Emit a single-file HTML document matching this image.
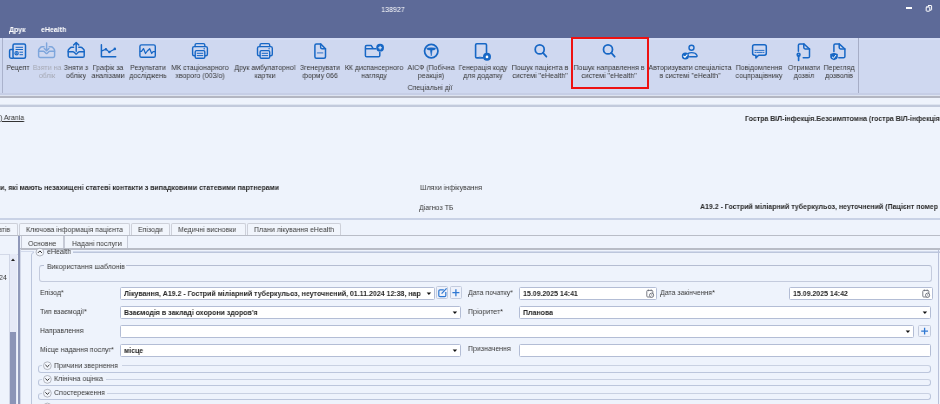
<!DOCTYPE html><html><head><meta charset="utf-8"><style>
html,body{margin:0;padding:0}
body{width:940px;height:404px;overflow:hidden;position:relative;background:#eef3fc;font-family:"Liberation Sans",sans-serif}
.t{position:absolute;white-space:nowrap;line-height:10px;will-change:transform}
.r{position:absolute;box-sizing:border-box}
svg{position:absolute;left:0;top:0}
</style></head><body>
<div class="r" style="left:0px;top:0px;width:940px;height:38px;background:#5d6a98"></div>
<div class="t" style="left:243px;top:5.0px;width:300px;text-align:center;font-size:8.049999999999999px;color:#ffffff;font-weight:normal;transform:scaleX(0.8696);transform-origin:150px 50%;">138927</div>
<div class="t" style="left:8.5px;top:25.0px;font-size:8.049999999999999px;color:#ffffff;font-weight:bold;transform:scaleX(0.8696);transform-origin:0 50%;">Друк</div>
<div class="t" style="left:41px;top:25.0px;font-size:8.049999999999999px;color:#ffffff;font-weight:bold;transform:scaleX(0.8696);transform-origin:0 50%;">eHealth</div>
<div class="r" style="left:905.6px;top:7.4px;width:6.3px;height:2px;background:#fff"></div>
<div class="r" style="left:0px;top:38px;width:940px;height:55px;background:#cfd8f0"></div>
<div class="r" style="left:0px;top:38px;width:940px;height:2px;background:#d5ddf5"></div>
<div class="r" style="left:1.5px;top:38px;width:1.2px;height:55px;background:#aab2cc"></div>
<div class="r" style="left:858px;top:38px;width:1px;height:55.3px;background:#a6adc6"></div>
<div class="r" style="left:0px;top:93px;width:940px;height:2px;background:#c6cee6"></div>
<div class="r" style="left:0px;top:95px;width:940px;height:1px;background:#dde3f0"></div>
<div class="r" style="left:0px;top:96px;width:940px;height:2px;background:#b3b6c2"></div>
<div class="r" style="left:0px;top:98px;width:940px;height:6px;background:#eef3fc"></div>
<div class="r" style="left:0px;top:104px;width:940px;height:1px;background:#dde4f0"></div>
<div class="r" style="left:0px;top:105px;width:940px;height:1.5px;background:#c2cadc"></div>
<div class="t" style="left:-132.5px;top:62.599999999999994px;width:300px;text-align:center;font-size:8.049999999999999px;color:#363636;font-weight:normal;transform:scaleX(0.8696);transform-origin:150px 50%;">Рецепт</div>
<div class="t" style="left:-103.5px;top:62.599999999999994px;width:300px;text-align:center;font-size:8.049999999999999px;color:#a6a9b4;font-weight:normal;transform:scaleX(0.8696);transform-origin:150px 50%;">Взяти на</div>
<div class="t" style="left:-103.5px;top:70.6px;width:300px;text-align:center;font-size:8.049999999999999px;color:#a6a9b4;font-weight:normal;transform:scaleX(0.8696);transform-origin:150px 50%;">облік</div>
<div class="t" style="left:-73.8px;top:62.599999999999994px;width:300px;text-align:center;font-size:8.049999999999999px;color:#363636;font-weight:normal;transform:scaleX(0.8696);transform-origin:150px 50%;">Зняти з</div>
<div class="t" style="left:-73.8px;top:70.6px;width:300px;text-align:center;font-size:8.049999999999999px;color:#363636;font-weight:normal;transform:scaleX(0.8696);transform-origin:150px 50%;">обліку</div>
<div class="t" style="left:-42px;top:62.599999999999994px;width:300px;text-align:center;font-size:8.049999999999999px;color:#363636;font-weight:normal;transform:scaleX(0.8696);transform-origin:150px 50%;">Графік за</div>
<div class="t" style="left:-42px;top:70.6px;width:300px;text-align:center;font-size:8.049999999999999px;color:#363636;font-weight:normal;transform:scaleX(0.8696);transform-origin:150px 50%;">аналізами</div>
<div class="t" style="left:-2.5px;top:62.599999999999994px;width:300px;text-align:center;font-size:8.049999999999999px;color:#363636;font-weight:normal;transform:scaleX(0.8696);transform-origin:150px 50%;">Результати</div>
<div class="t" style="left:-2.5px;top:70.6px;width:300px;text-align:center;font-size:8.049999999999999px;color:#363636;font-weight:normal;transform:scaleX(0.8696);transform-origin:150px 50%;">досліджень</div>
<div class="t" style="left:49.80000000000001px;top:62.599999999999994px;width:300px;text-align:center;font-size:8.049999999999999px;color:#363636;font-weight:normal;transform:scaleX(0.8696);transform-origin:150px 50%;">МК стаціонарного</div>
<div class="t" style="left:49.80000000000001px;top:70.6px;width:300px;text-align:center;font-size:8.049999999999999px;color:#363636;font-weight:normal;transform:scaleX(0.8696);transform-origin:150px 50%;">хворого (003/о)</div>
<div class="t" style="left:114.69999999999999px;top:62.599999999999994px;width:300px;text-align:center;font-size:8.049999999999999px;color:#363636;font-weight:normal;transform:scaleX(0.8696);transform-origin:150px 50%;">Друк амбулаторної</div>
<div class="t" style="left:114.69999999999999px;top:70.6px;width:300px;text-align:center;font-size:8.049999999999999px;color:#363636;font-weight:normal;transform:scaleX(0.8696);transform-origin:150px 50%;">картки</div>
<div class="t" style="left:170.10000000000002px;top:62.599999999999994px;width:300px;text-align:center;font-size:8.049999999999999px;color:#363636;font-weight:normal;transform:scaleX(0.8696);transform-origin:150px 50%;">Згенерувати</div>
<div class="t" style="left:170.10000000000002px;top:70.6px;width:300px;text-align:center;font-size:8.049999999999999px;color:#363636;font-weight:normal;transform:scaleX(0.8696);transform-origin:150px 50%;">форму 066</div>
<div class="t" style="left:223.8px;top:62.599999999999994px;width:300px;text-align:center;font-size:8.049999999999999px;color:#363636;font-weight:normal;transform:scaleX(0.8696);transform-origin:150px 50%;">КК диспансерного</div>
<div class="t" style="left:223.8px;top:70.6px;width:300px;text-align:center;font-size:8.049999999999999px;color:#363636;font-weight:normal;transform:scaleX(0.8696);transform-origin:150px 50%;">нагляду</div>
<div class="t" style="left:281.3px;top:62.599999999999994px;width:300px;text-align:center;font-size:8.049999999999999px;color:#363636;font-weight:normal;transform:scaleX(0.8696);transform-origin:150px 50%;">АІСФ (Побічна</div>
<div class="t" style="left:281.3px;top:70.6px;width:300px;text-align:center;font-size:8.049999999999999px;color:#363636;font-weight:normal;transform:scaleX(0.8696);transform-origin:150px 50%;">реакція)</div>
<div class="t" style="left:333px;top:62.599999999999994px;width:300px;text-align:center;font-size:8.049999999999999px;color:#363636;font-weight:normal;transform:scaleX(0.8696);transform-origin:150px 50%;">Генерація коду</div>
<div class="t" style="left:333px;top:70.6px;width:300px;text-align:center;font-size:8.049999999999999px;color:#363636;font-weight:normal;transform:scaleX(0.8696);transform-origin:150px 50%;">для додатку</div>
<div class="t" style="left:390.29999999999995px;top:62.599999999999994px;width:300px;text-align:center;font-size:8.049999999999999px;color:#363636;font-weight:normal;transform:scaleX(0.8696);transform-origin:150px 50%;">Пошук пацієнта в</div>
<div class="t" style="left:390.29999999999995px;top:70.6px;width:300px;text-align:center;font-size:8.049999999999999px;color:#363636;font-weight:normal;transform:scaleX(0.8696);transform-origin:150px 50%;">системі "eHealth"</div>
<div class="t" style="left:459px;top:62.599999999999994px;width:300px;text-align:center;font-size:8.049999999999999px;color:#363636;font-weight:normal;transform:scaleX(0.8696);transform-origin:150px 50%;">Пошук направлення в</div>
<div class="t" style="left:459px;top:70.6px;width:300px;text-align:center;font-size:8.049999999999999px;color:#363636;font-weight:normal;transform:scaleX(0.8696);transform-origin:150px 50%;">системі "eHealth"</div>
<div class="t" style="left:540.1px;top:62.599999999999994px;width:300px;text-align:center;font-size:8.049999999999999px;color:#363636;font-weight:normal;transform:scaleX(0.8696);transform-origin:150px 50%;">Авторизувати спеціаліста</div>
<div class="t" style="left:540.1px;top:70.6px;width:300px;text-align:center;font-size:8.049999999999999px;color:#363636;font-weight:normal;transform:scaleX(0.8696);transform-origin:150px 50%;">в системі "eHealth"</div>
<div class="t" style="left:609.4px;top:62.599999999999994px;width:300px;text-align:center;font-size:8.049999999999999px;color:#363636;font-weight:normal;transform:scaleX(0.8696);transform-origin:150px 50%;">Повідомлення</div>
<div class="t" style="left:609.4px;top:70.6px;width:300px;text-align:center;font-size:8.049999999999999px;color:#363636;font-weight:normal;transform:scaleX(0.8696);transform-origin:150px 50%;">соцпрацівнику</div>
<div class="t" style="left:653.6px;top:62.599999999999994px;width:300px;text-align:center;font-size:8.049999999999999px;color:#363636;font-weight:normal;transform:scaleX(0.8696);transform-origin:150px 50%;">Отримати</div>
<div class="t" style="left:653.6px;top:70.6px;width:300px;text-align:center;font-size:8.049999999999999px;color:#363636;font-weight:normal;transform:scaleX(0.8696);transform-origin:150px 50%;">дозвіл</div>
<div class="t" style="left:688.7px;top:62.599999999999994px;width:300px;text-align:center;font-size:8.049999999999999px;color:#363636;font-weight:normal;transform:scaleX(0.8696);transform-origin:150px 50%;">Перегляд</div>
<div class="t" style="left:688.7px;top:70.6px;width:300px;text-align:center;font-size:8.049999999999999px;color:#363636;font-weight:normal;transform:scaleX(0.8696);transform-origin:150px 50%;">дозволів</div>
<div class="t" style="left:280.2px;top:83.2px;width:300px;text-align:center;font-size:8.049999999999999px;color:#383838;font-weight:normal;transform:scaleX(0.8696);transform-origin:150px 50%;">Спеціальні дії</div>
<div class="r" style="left:571.3px;top:37px;width:77.4px;height:52.4px;border:2px solid #ee1111"></div>

<svg width="940" height="100" viewBox="0 0 940 100" fill="none" stroke-linecap="round" stroke-linejoin="round">
 <!-- Рецепт -->
 <g stroke="#1767c5" stroke-width="1.5">
  <rect x="13" y="44" width="12.5" height="14.2" rx="1.5"/>
  <path d="M13 49.5 H10.8 Q9.6 49.5 9.6 50.8 V56.8 Q9.6 58.2 11 58.2 H13"/>
  <path d="M16 47.3 H22.6 M16 49.5 H22.6 M19.9 52.2 H22.6 M19.9 54.7 H22.6" stroke-width="1"/>
  <circle cx="16.6" cy="53.2" r="1.7" stroke-width="1.1"/>
  <path d="M16.6 52.4 V54 M15.8 53.2 H17.4" stroke-width="0.7"/>
 </g>
 <!-- Взяти на (disabled) -->
 <g stroke="#7ea6dc" stroke-width="1.45">
  <path d="M46.6 43 V50.4 M44.3 48.4 L46.6 50.7 L48.9 48.4"/>
  <path d="M44.0 46.8 H42.2 Q41.0 46.8 40.2 47.8 L38.800000000000004 49.4 Q38.6 49.9 38.6 50.599999999999994 V56.1 Q38.6 57.5 40.0 57.5 H53.2 Q54.6 57.5 54.6 56.1 V50.599999999999994 Q54.6 49.9 54.4 49.4 L53.0 47.8 Q52.2 46.8 51.0 46.8 H49.2"/>
  <path d="M38.6 51.3 H43.300000000000004 Q44.0 51.3 44.5 51.8 L45.9 53.199999999999996 Q46.6 53.8 47.300000000000004 53.199999999999996 L48.7 51.8 Q49.2 51.3 49.9 51.3 H54.6"/>
 </g>
 <!-- Зняти з -->
 <g stroke="#1767c5" stroke-width="1.45">
  <path d="M76.2 51.2 V42.6 M73.6 45 L76.2 42.4 L78.8 45"/>
  <path d="M73.60000000000001 47.2 H71.8 Q70.60000000000001 47.2 69.8 48.2 L68.4 49.800000000000004 Q68.2 50.300000000000004 68.2 51.0 V55.9 Q68.2 57.3 69.60000000000001 57.3 H82.8 Q84.2 57.3 84.2 55.9 V51.0 Q84.2 50.300000000000004 84.0 49.800000000000004 L82.60000000000001 48.2 Q81.8 47.2 80.60000000000001 47.2 H78.8"/>
  <path d="M68.2 51.7 H72.9 Q73.60000000000001 51.7 74.10000000000001 52.2 L75.5 53.6 Q76.2 54.2 76.9 53.6 L78.3 52.2 Q78.8 51.7 79.5 51.7 H84.2"/>
 </g>
 <!-- Графік -->
 <g stroke="#1767c5" stroke-width="1.4">
  <path d="M101.4 44.8 V56.8 H115.7" stroke-width="1.5"/>
  <path d="M101.8 50.9 L105.9 49.2 L109.4 52.1 L114.8 48.9" stroke-width="1.2"/>
 </g>
 <g fill="#1767c5"><circle cx="105.9" cy="49.2" r="1.25"/><circle cx="109.4" cy="52.1" r="1.25"/><circle cx="114.8" cy="48.9" r="1.3"/></g>
 <!-- Результати -->
 <g stroke="#1767c5" stroke-width="1.4">
  <rect x="139.9" y="44.9" width="15.4" height="12.4" rx="1.6"/>
  <path d="M140.4 51.4 H141.5 L143.5 48.6 L145.5 53.5 L147.3 51 L149.7 48.7 L151.7 53.5 L153.1 51.6 H154.8" stroke-width="1.25"/>
 </g>
 <g stroke="#1767c5" stroke-width="1.4">
  <path d="M195.1 46.5 V45 Q195.1 43.6 196.5 43.6 H203.4 Q204.8 43.6 204.8 45 V46.5"/>
  <path d="M194.70000000000002 55.8 H194.1 Q192.6 55.8 192.6 54.3 V48.2 Q192.6 46.6 194.20000000000002 46.6 H205.8 Q207.4 46.6 207.4 48.2 V54.3 Q207.4 55.8 205.9 55.8 H205.3"/>
  <rect x="195.20000000000002" y="50.6" width="9.6" height="7.7" rx="1.3"/>
  <path d="M197.20000000000002 53.3 H202.8 M197.20000000000002 55.6 H202.8" stroke-width="1"/>
 </g><circle cx="204.20000000000002" cy="48.7" r="0.7" fill="#1767c5"/><g stroke="#1767c5" stroke-width="1.4">
  <path d="M259.99999999999994 46.5 V45 Q259.99999999999994 43.6 261.4 43.6 H268.29999999999995 Q269.69999999999993 43.6 269.69999999999993 45 V46.5"/>
  <path d="M259.59999999999997 55.8 H258.99999999999994 Q257.49999999999994 55.8 257.49999999999994 54.3 V48.2 Q257.49999999999994 46.6 259.09999999999997 46.6 H270.69999999999993 Q272.29999999999995 46.6 272.29999999999995 48.2 V54.3 Q272.29999999999995 55.8 270.79999999999995 55.8 H270.19999999999993"/>
  <rect x="260.09999999999997" y="50.6" width="9.6" height="7.7" rx="1.3"/>
  <path d="M262.09999999999997 53.3 H267.69999999999993 M262.09999999999997 55.6 H267.69999999999993" stroke-width="1"/>
 </g><circle cx="269.09999999999997" cy="48.7" r="0.7" fill="#1767c5"/>
 <!-- Згенерувати -->
 <g stroke="#1767c5" stroke-width="1.4">
  <path d="M320.6 43.9 H316.4 Q314.9 43.9 314.9 45.4 V56.7 Q314.9 58.2 316.4 58.2 H324 Q325.5 58.2 325.5 56.7 V48.8 Z" stroke-width="1.5"/>
  <path d="M320.6 43.9 V47.3 Q320.6 48.8 322.1 48.8 H325.5"/>
  <path d="M317.5 52.9 H322.7" stroke-width="1.4" stroke="#4f86d0"/>
 </g>
 <!-- KK folder -->
 <g stroke="#1767c5" stroke-width="1.4">
  <path d="M375.8 48.8 H366 M375.5 48.8 H373.3 L371.3 45.6 H366.6 Q365.4 45.6 365.4 46.8 V55.5 Q365.4 56.8 366.7 56.8 H378.5 Q379.8 56.8 379.8 55.5 V52.2" stroke-width="1.5"/>
 </g>
 <circle cx="380.1" cy="47.7" r="3.9" fill="#1767c5"/>
 <path d="M380.1 46.3 V49.1 M378.7 47.7 H381.5" stroke="#e4ebf8" stroke-width="1.1"/>
 <!-- АІСФ -->
 <circle cx="431.25" cy="51.05" r="6.7" stroke="#1767c5" stroke-width="1.75"/>
 <path d="M427 48.1 Q431.25 47.4 435.5 48.1 L435.1 49.5 Q433.4 50.1 432.2 50 L431.25 55.9 L430.3 50 Q429.1 50.1 427.4 49.5 Z" fill="#1767c5" stroke="#1767c5" stroke-width="0.5"/>
 <!-- Генерація -->
 <g stroke="#1767c5" stroke-width="1.4">
  <path d="M483 57.9 H476.8 Q475.6 57.9 475.6 56.7 V44.9 Q475.6 43.7 476.8 43.7 H485.3 Q486.5 43.7 486.5 44.9 V52.4" stroke-width="1.6"/>
  <path d="M479.2 56.8 H481" stroke-width="0.8" stroke="#7aa4dc"/>
 </g>
 <circle cx="487" cy="56.7" r="4" fill="#1767c5"/>
 <circle cx="487" cy="56.9" r="1.35" fill="#fff"/>
 <g stroke="#1767c5" stroke-width="1.75"><circle cx="539.6999999999999" cy="49.4" r="4.5"/><path d="M543.0 52.9 L546.4 56.7"/></g><g stroke="#1767c5" stroke-width="1.75"><circle cx="608.0" cy="49.4" r="4.5"/><path d="M611.3000000000001 52.9 L614.7 56.7"/></g>
 <!-- Авторизувати -->
 <g stroke="#1767c5" stroke-width="1.4">
  <circle cx="691.5" cy="47.8" r="2.5"/>
  <path d="M689.6 56.7 H696.2 Q697.4 56.7 697 55.5 Q695.8 52.6 691.5 52.6 Q689.5 52.6 688.3 53.3"/>
 </g>
 <circle cx="685.4" cy="56" r="3.6" fill="#1767c5"/>
 <path d="M683.7 56.1 L684.9 57.3 L687.1 54.8" stroke="#fff" stroke-width="1.1"/>
 <!-- Повідомлення -->
 <g stroke="#1767c5" stroke-width="1.4">
  <path d="M754.6 55.2 H754.5 Q752.6 55.2 752.6 53.3 V46.6 Q752.6 44.7 754.5 44.7 H764.4 Q766.3 44.7 766.3 46.6 V53.3 Q766.3 55.2 764.4 55.2 H758.6 L755.9 57.9 V55.2" stroke-width="1.5"/>
  <path d="M755 50.4 H757.6 M758.6 50.4 H764 M755 52.4 H755.9 M757 52.4 H762.2 M763.2 52.4 H764" stroke-width="0.9"/>
 </g>
 <!-- Отримати -->
 <g stroke="#1767c5" stroke-width="1.5">
  <path d="M798.4 51.2 V45.3 Q798.4 43.9 799.8 43.9 H803.8 L809.5 49 V56.4 Q809.5 57.8 808.1 57.8 H803.2"/>
  <path d="M803.8 43.9 V47.6 Q803.8 49 805.2 49 H809.5"/>
  <path d="M798.6 55 V60.3" stroke-width="1.7"/>
 </g>
 <circle cx="798.6" cy="54.8" r="2.2" fill="#1767c5"/>
 <circle cx="798.6" cy="54.4" r="0.6" fill="#7aa4dc"/>
 <!-- Перегляд -->
 <g stroke="#1767c5" stroke-width="1.5">
  <path d="M833.9 51.6 V45.3 Q833.9 43.9 835.3 43.9 H839.2 L844.9 49 V56.4 Q844.9 57.8 843.5 57.8 H838.8"/>
  <path d="M839.2 43.9 V47.6 Q839.2 49 840.6 49 H844.9"/>
 </g>
 <path d="M834 52.8 L837.8 54 V57 Q837.6 59.2 834 60.2 Q830.4 59.2 830.2 57 V54 Z" fill="#1767c5"/>
 <path d="M832.3 57 L833.5 58.2 L835.7 55.4" stroke="#fff" stroke-width="1"/>
 <!-- restore window icon -->
 <g stroke="#fff" stroke-width="1">
  <rect x="928.2" y="5.5" width="3.4" height="4.6" rx="0.4"/>
  <rect x="926.2" y="7" width="3.6" height="4.2" rx="0.6" fill="#5d6a98"/>
 </g>
</svg>
<div class="t" style="left:0px;top:113.0px;font-size:8.049999999999999px;color:#333;font-weight:normal;transform:scaleX(0.8696);transform-origin:0 50%;text-decoration:underline;left:-0.5px">) Arania</div>
<div class="t" style="left:745.2px;top:113.6px;font-size:8.049999999999999px;color:#2a2a2a;font-weight:bold;transform:scaleX(0.8696);transform-origin:0 50%;">Гостра ВІЛ-інфекція.Безсимптомна (гостра ВІЛ-інфекція</div>
<div class="t" style="left:0px;top:182.5px;font-size:8.049999999999999px;color:#2a2a2a;font-weight:bold;transform:scaleX(0.8696);transform-origin:0 50%;">и, які мають незахищені статеві контакти з випадковими статевими партнерами</div>
<div class="t" style="left:419.8px;top:182.6px;font-size:8.049999999999999px;color:#3a3a3a;font-weight:normal;transform:scaleX(0.8696);transform-origin:0 50%;">Шляхи інфікування</div>
<div class="t" style="left:419.4px;top:202.8px;font-size:8.049999999999999px;color:#3a3a3a;font-weight:normal;transform:scaleX(0.8696);transform-origin:0 50%;">Діагноз ТБ</div>
<div class="t" style="left:700.1px;top:202.4px;font-size:8.049999999999999px;color:#2a2a2a;font-weight:bold;transform:scaleX(0.8696);transform-origin:0 50%;">A19.2 - Гострий міліарний туберкульоз, неуточнений (Пацієнт помер</div>
<div class="r" style="left:0px;top:218px;width:940px;height:1.5px;background:#c9d2e6"></div>
<div class="r" style="left:0px;top:223px;width:940px;height:12px;background:#eef3fc"></div>
<div class="r" style="left:-20px;top:223px;width:38px;height:12.5px;background:#f1f5fc;border:1px solid #cdd0d9;border-bottom:none;border-radius:2px 2px 0 0"></div>
<div class="t" style="left:-2px;top:225.0px;font-size:8.049999999999999px;color:#3c3c3c;font-weight:normal;transform:scaleX(0.8696);transform-origin:0 50%;">атів</div>
<div class="r" style="left:18.5px;top:223px;width:111.30000000000001px;height:12.5px;background:#f1f5fc;border:1px solid #cdd0d9;border-bottom:none;border-radius:2px 2px 0 0"></div>
<div class="t" style="left:25.6px;top:225.0px;font-size:8.049999999999999px;color:#3c3c3c;font-weight:normal;transform:scaleX(0.8696);transform-origin:0 50%;">Ключова інформація пацієнта</div>
<div class="r" style="left:131px;top:223px;width:39.19999999999999px;height:12.5px;background:#f1f5fc;border:1px solid #cdd0d9;border-bottom:none;border-radius:2px 2px 0 0"></div>
<div class="t" style="left:138.4px;top:225.0px;font-size:8.049999999999999px;color:#3c3c3c;font-weight:normal;transform:scaleX(0.8696);transform-origin:0 50%;">Епізоди</div>
<div class="r" style="left:171.4px;top:223px;width:74.6px;height:12.5px;background:#f1f5fc;border:1px solid #cdd0d9;border-bottom:none;border-radius:2px 2px 0 0"></div>
<div class="t" style="left:178.2px;top:225.0px;font-size:8.049999999999999px;color:#3c3c3c;font-weight:normal;transform:scaleX(0.8696);transform-origin:0 50%;">Медичні висновки</div>
<div class="r" style="left:247.2px;top:223px;width:94.19999999999999px;height:12.5px;background:#f1f5fc;border:1px solid #cdd0d9;border-bottom:none;border-radius:2px 2px 0 0"></div>
<div class="t" style="left:254px;top:225.0px;font-size:8.049999999999999px;color:#3c3c3c;font-weight:normal;transform:scaleX(0.8696);transform-origin:0 50%;">Плани лікування eHealth</div>
<div class="r" style="left:0px;top:234.6px;width:940px;height:1.2px;background:#b9bdc7"></div>
<div class="r" style="left:0px;top:236px;width:18.3px;height:168px;background:#eef3fc"></div>
<div class="r" style="left:0px;top:253.5px;width:18.3px;height:1px;background:#d3d9e8"></div>
<div class="r" style="left:8.7px;top:254px;width:8.5px;height:150px;background:#e5e9f7;border-left:1px solid #d0d6e6"></div>
<svg width="20" height="270" style="left:0;top:0"><path d="M11 261 L13 258.6 L15 261 Z" fill="#222"/></svg>
<div class="r" style="left:9.8px;top:331.8px;width:6.3px;height:73px;background:#8b94b7"></div>
<div class="t" style="left:-1px;top:272.7px;font-size:8.049999999999999px;color:#3a3a3a;font-weight:normal;transform:scaleX(0.8696);transform-origin:0 50%;">24</div>
<div class="r" style="left:17.5px;top:236px;width:3.3px;height:168px;background:#b4bbd4"></div>
<div class="r" style="left:18.2px;top:236px;width:2px;height:168px;background:#8f98b9"></div>
<div class="r" style="left:20px;top:236px;width:920px;height:168px;background:#eef3fc"></div>
<div class="r" style="left:20.5px;top:236px;width:43px;height:12.2px;background:#f1f5fc;border:1px solid #c6cad6;border-bottom:none;border-top:none"></div>
<div class="r" style="left:63.9px;top:236px;width:64.2px;height:12.2px;background:#f1f5fc;border:1px solid #c6cad6;border-bottom:none;border-top:none"></div>
<div class="t" style="left:27.7px;top:238.6px;font-size:8.049999999999999px;color:#3c3c3c;font-weight:normal;transform:scaleX(0.8696);transform-origin:0 50%;">Основне</div>
<div class="t" style="left:71.6px;top:238.6px;font-size:8.049999999999999px;color:#3c3c3c;font-weight:normal;transform:scaleX(0.8696);transform-origin:0 50%;">Надані послуги</div>
<div class="r" style="left:20px;top:248px;width:920px;height:1.5px;background:#b8bcc6"></div>
<div class="r" style="left:20px;top:250.5px;width:920px;height:1px;background:#d2daec"></div>
<div class="r" style="left:20px;top:249px;width:1.2px;height:155px;background:#d0d6e6"></div>
<div class="r" style="left:938px;top:249.5px;width:1.2px;height:155px;background:#b9c1d9"></div>
<div class="r" style="left:30.5px;top:251.5px;width:920px;height:160px;border:1px solid #bcc6dc;border-radius:3px"></div>
<div class="r" style="left:34px;top:249.6px;width:38.5px;height:5px;background:#eef3fc"></div>
<svg width="60" height="260" style="left:0;top:0"><circle cx="39.9" cy="252.1" r="3.9" stroke="#a2a6b0" stroke-width="0.8" fill="#f3f6fc"/><path d="M37.9 252.9 L39.9 250.9 L41.9 252.9" stroke="#2a2a2a" stroke-width="1" fill="none"/></svg>
<div class="t" style="left:46.6px;top:246.8px;font-size:8.049999999999999px;color:#333;font-weight:normal;transform:scaleX(0.8696);transform-origin:0 50%;">eHealth</div>
<div class="r" style="left:39px;top:264.7px;width:892.5px;height:17px;border:1px solid #c4cbdd;border-top-color:#b5bdd2;border-radius:3px"></div>
<div class="r" style="left:44px;top:262px;width:82px;height:8px;background:#eef3fc"></div>
<div class="t" style="left:47.2px;top:261.8px;font-size:8.049999999999999px;color:#3a3a3a;font-weight:normal;transform:scaleX(0.8696);transform-origin:0 50%;">Використання шаблонів</div>
<div class="t" style="left:40.4px;top:287.9px;font-size:8.049999999999999px;color:#383838;font-weight:normal;transform:scaleX(0.8696);transform-origin:0 50%;">Епізод*</div>
<div class="r" style="left:120.3px;top:287px;width:314.4px;height:13px;background:#fff;border:1px solid #b3bdd5;border-radius:1.5px"></div>
<div class="t" style="left:123.6px;top:288.9px;font-size:8.049999999999999px;color:#262626;font-weight:bold;transform:scaleX(0.8696);transform-origin:0 50%;">Лікування, A19.2 - Гострий міліарний туберкульоз, неуточнений, 01.11.2024 12:38, нар</div>
<svg width="10" height="10" style="left:424.7px;top:291px"><path d="M1.7 1.6 H6.1 L3.9 4.1 Z" fill="#111"/></svg>
<div class="r" style="left:136px;top:287px;width:290px;height:13px;display:none"></div>
<div class="r" style="left:436.3px;top:286.4px;width:11.8px;height:12.6px;background:#eef2fb;border:1px solid #c3cbdd;border-radius:1.5px"></div>
<div class="r" style="left:450px;top:286.4px;width:11.9px;height:12.6px;background:#eef2fb;border:1px solid #c3cbdd;border-radius:1.5px"></div>
<div class="t" style="left:468.3px;top:287.9px;font-size:8.049999999999999px;color:#383838;font-weight:normal;transform:scaleX(0.8696);transform-origin:0 50%;">Дата початку*</div>
<div class="r" style="left:519.4px;top:287px;width:137.89999999999998px;height:13px;background:#fff;border:1px solid #b3bdd5;border-radius:1.5px"></div>
<div class="t" style="left:522.6999999999999px;top:288.9px;font-size:8.049999999999999px;color:#262626;font-weight:bold;transform:scaleX(0.8696);transform-origin:0 50%;">15.09.2025 14:41</div>
<svg width="12" height="12" style="left:645.3px;top:288px"><g stroke="#6b6e78" stroke-width="0.9" fill="none"><rect x="1.8" y="2.4" width="6" height="6.6" rx="0.9"/><path d="M3.4 1.6 V3.2 M6.2 1.6 V3.2"/><circle cx="6.6" cy="7.2" r="2.1" fill="#fff"/><path d="M6.6 6.3 V7.3 H7.4" stroke-width="0.7"/></g></svg>
<div class="t" style="left:660.1px;top:287.9px;font-size:8.049999999999999px;color:#383838;font-weight:normal;transform:scaleX(0.8696);transform-origin:0 50%;">Дата закінчення*</div>
<div class="r" style="left:789.4px;top:287px;width:143.89999999999998px;height:13px;background:#fff;border:1px solid #b3bdd5;border-radius:1.5px"></div>
<div class="t" style="left:792.6999999999999px;top:288.9px;font-size:8.049999999999999px;color:#262626;font-weight:bold;transform:scaleX(0.8696);transform-origin:0 50%;">15.09.2025 14:42</div>
<svg width="12" height="12" style="left:921.3px;top:288px"><g stroke="#6b6e78" stroke-width="0.9" fill="none"><rect x="1.8" y="2.4" width="6" height="6.6" rx="0.9"/><path d="M3.4 1.6 V3.2 M6.2 1.6 V3.2"/><circle cx="6.6" cy="7.2" r="2.1" fill="#fff"/><path d="M6.6 6.3 V7.3 H7.4" stroke-width="0.7"/></g></svg>
<div class="t" style="left:40.4px;top:306.8px;font-size:8.049999999999999px;color:#383838;font-weight:normal;transform:scaleX(0.8696);transform-origin:0 50%;">Тип взаємодії*</div>
<div class="r" style="left:120.3px;top:306px;width:341.09999999999997px;height:13px;background:#fff;border:1px solid #b3bdd5;border-radius:1.5px"></div>
<div class="t" style="left:123.6px;top:307.9px;font-size:8.049999999999999px;color:#262626;font-weight:bold;transform:scaleX(0.8696);transform-origin:0 50%;">Взаємодія в закладі охорони здоров'я</div>
<svg width="10" height="10" style="left:451.4px;top:310px"><path d="M1.7 1.6 H6.1 L3.9 4.1 Z" fill="#111"/></svg>
<div class="t" style="left:468.3px;top:306.8px;font-size:8.049999999999999px;color:#383838;font-weight:normal;transform:scaleX(0.8696);transform-origin:0 50%;">Пріоритет*</div>
<div class="r" style="left:519.4px;top:306px;width:411.30000000000007px;height:13px;background:#fff;border:1px solid #b3bdd5;border-radius:1.5px"></div>
<div class="t" style="left:522.6999999999999px;top:307.9px;font-size:8.049999999999999px;color:#262626;font-weight:bold;transform:scaleX(0.8696);transform-origin:0 50%;">Планова</div>
<svg width="10" height="10" style="left:920.7px;top:310px"><path d="M1.7 1.6 H6.1 L3.9 4.1 Z" fill="#111"/></svg>
<div class="t" style="left:40.4px;top:325.5px;font-size:8.049999999999999px;color:#383838;font-weight:normal;transform:scaleX(0.8696);transform-origin:0 50%;">Направлення</div>
<div class="r" style="left:120.3px;top:325px;width:793.7px;height:13px;background:#fff;border:1px solid #b3bdd5;border-radius:1.5px"></div>
<svg width="10" height="10" style="left:904px;top:329px"><path d="M1.7 1.6 H6.1 L3.9 4.1 Z" fill="#111"/></svg>
<div class="r" style="left:918.4px;top:325px;width:12.3px;height:12.4px;background:#eef2fb;border:1px solid #c3cbdd;border-radius:1.5px"></div>
<svg width="940" height="404" style="left:0;top:0" fill="none">
 <g stroke="#2f78d2" stroke-width="1.2"><path d="M443.8 289.9 H440 Q438.8 289.9 438.8 291.1 V295.5 Q438.8 296.7 440 296.7 H444.6 Q445.8 296.7 445.8 295.5 V292"/><path d="M441.6 293.6 L446.6 288.4"/></g>
 <path d="M455.9 289.2 V296.2 M452.4 292.7 H459.4" stroke="#2f78d2" stroke-width="1.3"/>
 <path d="M924.6 327.8 V334.6 M921.2 331.2 H928" stroke="#2f78d2" stroke-width="1.3"/>
</svg>
<div class="t" style="left:40.4px;top:344.5px;font-size:8.049999999999999px;color:#383838;font-weight:normal;transform:scaleX(0.8696);transform-origin:0 50%;">Місце надання послуг*</div>
<div class="r" style="left:120.3px;top:344px;width:341.09999999999997px;height:13px;background:#fff;border:1px solid #b3bdd5;border-radius:1.5px"></div>
<div class="t" style="left:123.6px;top:345.9px;font-size:8.049999999999999px;color:#262626;font-weight:bold;transform:scaleX(0.8696);transform-origin:0 50%;">місце</div>
<svg width="10" height="10" style="left:451.4px;top:348px"><path d="M1.7 1.6 H6.1 L3.9 4.1 Z" fill="#111"/></svg>
<div class="t" style="left:468.3px;top:344.3px;font-size:8.049999999999999px;color:#383838;font-weight:normal;transform:scaleX(0.8696);transform-origin:0 50%;">Призначення</div>
<div class="r" style="left:519.4px;top:344px;width:411.30000000000007px;height:13px;background:#fff;border:1px solid #b3bdd5;border-radius:1.5px"></div>
<div class="r" style="left:37.9px;top:365.09999999999997px;width:893.6px;height:7.6px;border:1px solid #bcc6dc;border-top:1px solid #c9d1e2;border-radius:3px"></div>
<div class="r" style="left:42px;top:360.7px;width:80px;height:9px;background:#eef3fc"></div>
<svg width="60" height="420" style="left:0;top:0"><circle cx="47.4" cy="365.7" r="3.9" stroke="#a2a6b0" stroke-width="0.8" fill="#f3f6fc"/><path d="M45.4 364.9 L47.4 366.8 L49.4 364.9" stroke="#2a2a2a" stroke-width="1" fill="none"/></svg>
<div class="t" style="left:54px;top:360.7px;font-size:8.049999999999999px;color:#3a3a3a;font-weight:normal;transform:scaleX(0.8696);transform-origin:0 50%;">Причини звернення</div>
<div class="r" style="left:37.9px;top:378.79999999999995px;width:893.6px;height:7.6px;border:1px solid #bcc6dc;border-top:1px solid #c9d1e2;border-radius:3px"></div>
<div class="r" style="left:42px;top:374.4px;width:64px;height:9px;background:#eef3fc"></div>
<svg width="60" height="420" style="left:0;top:0"><circle cx="47.4" cy="379.4" r="3.9" stroke="#a2a6b0" stroke-width="0.8" fill="#f3f6fc"/><path d="M45.4 378.59999999999997 L47.4 380.5 L49.4 378.59999999999997" stroke="#2a2a2a" stroke-width="1" fill="none"/></svg>
<div class="t" style="left:54px;top:374.4px;font-size:8.049999999999999px;color:#3a3a3a;font-weight:normal;transform:scaleX(0.8696);transform-origin:0 50%;">Клінічна оцінка</div>
<div class="r" style="left:37.9px;top:392.59999999999997px;width:893.6px;height:7.6px;border:1px solid #bcc6dc;border-top:1px solid #c9d1e2;border-radius:3px"></div>
<div class="r" style="left:42px;top:388.2px;width:65px;height:9px;background:#eef3fc"></div>
<svg width="60" height="420" style="left:0;top:0"><circle cx="47.4" cy="393.2" r="3.9" stroke="#a2a6b0" stroke-width="0.8" fill="#f3f6fc"/><path d="M45.4 392.4 L47.4 394.3 L49.4 392.4" stroke="#2a2a2a" stroke-width="1" fill="none"/></svg>
<div class="t" style="left:54px;top:388.2px;font-size:8.049999999999999px;color:#3a3a3a;font-weight:normal;transform:scaleX(0.8696);transform-origin:0 50%;">Спостереження</div>
<div class="r" style="left:37.9px;top:406.4px;width:893.6px;height:7.6px;border:1px solid #bcc6dc;border-top:1px solid #c9d1e2;border-radius:3px"></div>
<div class="r" style="left:42px;top:402px;width:13px;height:9px;background:#eef3fc"></div>
<svg width="60" height="420" style="left:0;top:0"><circle cx="47.4" cy="407" r="3.9" stroke="#a2a6b0" stroke-width="0.8" fill="#f3f6fc"/><path d="M45.4 406.2 L47.4 408.1 L49.4 406.2" stroke="#2a2a2a" stroke-width="1" fill="none"/></svg>
</body></html>
